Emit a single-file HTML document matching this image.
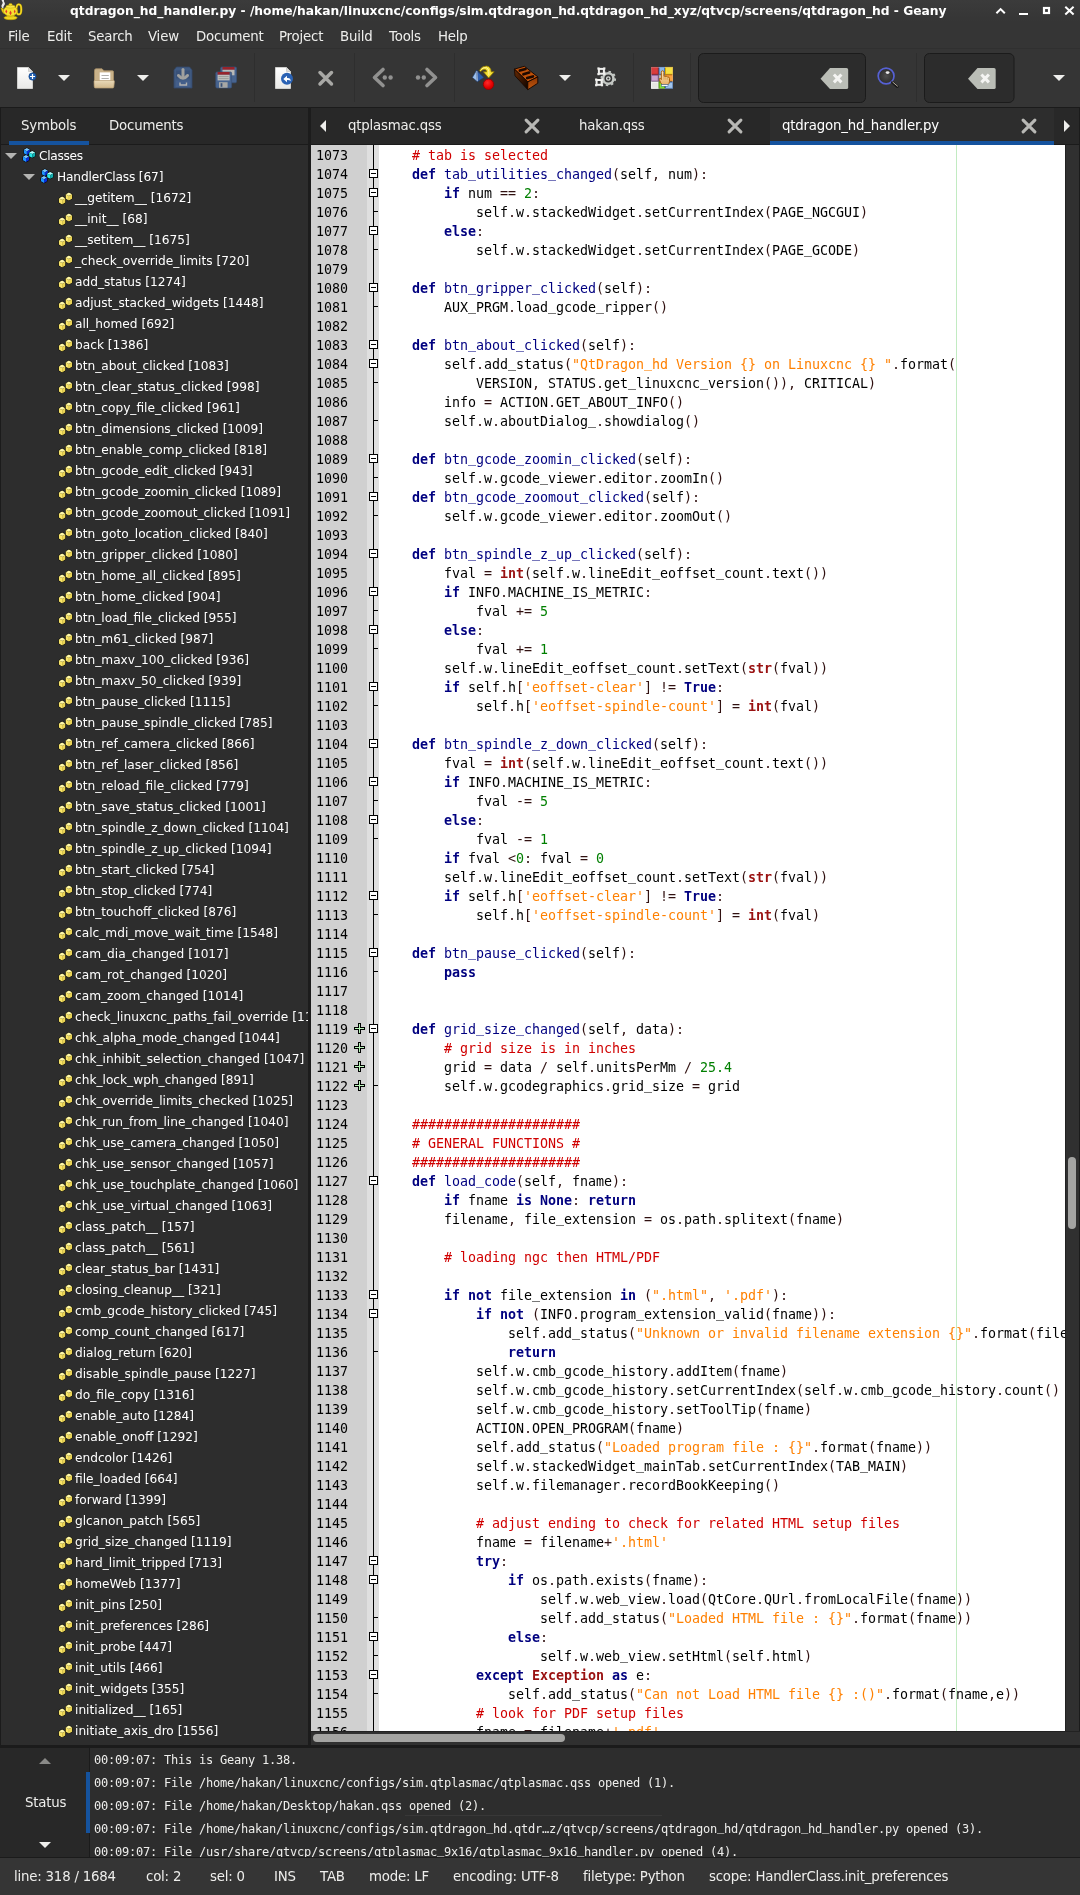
<!DOCTYPE html>
<html><head><meta charset="utf-8"><title>Geany</title>
<style>
*{box-sizing:border-box;margin:0;padding:0}
html,body{width:1080px;height:1895px;overflow:hidden;background:#353535}
body{position:relative;will-change:transform;font-family:"DejaVu Sans","Liberation Sans",sans-serif;font-size:13.33px;letter-spacing:-0.2px;color:#eeeeec}
svg{display:block;overflow:visible}
.a{position:absolute}
#title{position:absolute;left:0;top:0;width:1080px;height:22px;background:linear-gradient(#3b3b3b,#353535)}
#title .t{position:absolute;left:70px;top:3px;font-weight:bold;font-size:12.27px;letter-spacing:0;color:#fff;white-space:nowrap;line-height:16px}
#menu{position:absolute;left:0;top:22px;width:1080px;height:27px;background:#353535;border-bottom:1px solid #303030}
#menu span{position:absolute;top:7px;line-height:16px;color:#eeeeec;white-space:nowrap}
#tool{position:absolute;left:0;top:50px;width:1080px;height:57px;background:#353535}
#tool .sep{position:absolute;top:3px;width:1px;height:49px;background:#282828}
#tool .ent{position:absolute;top:3px;height:50px;background:#2a2a2a;border:1px solid #1a1a1a;border-radius:5px}
#side{position:absolute;left:0;top:107px;width:308px;height:1638px;background:#2d2d2d;overflow:hidden;border-top:1px solid #1b1b1b}
#side .lb{position:absolute;left:0;top:0;width:1px;height:1639px;background:#1b1b1b}
#side .hdr{position:absolute;left:0;top:0;width:308px;height:37px;background:#282828;border-bottom:1px solid #1b1b1b}
#side .hdr span{position:absolute;top:10px;line-height:16px}
#side .hdr .ul{position:absolute;left:9px;top:33px;width:80px;height:4px;background:#15539e}
.ti{position:absolute;left:75px;height:21px;line-height:22px;white-space:nowrap;font-size:12.18px;letter-spacing:0;color:#fff}
.ti .mi{position:absolute;left:-18px;top:2px}
#ed{position:absolute;left:311px;top:107px;width:769px;height:1638px;background:#fff;overflow:hidden;border-top:1px solid #1b1b1b}
#psep{position:absolute;left:308px;top:107px;width:3px;height:1638px;background:#1c1c1c}
#ed .hdr{position:absolute;left:0;top:0;width:769px;height:37px;background:#282828;border-bottom:1px solid #1b1b1b}
#ed .hdr span{position:absolute;top:10px;line-height:16px;white-space:nowrap}
#ed .hdr .act{position:absolute;left:459px;top:0;width:284px;height:37px;background:#2d2d2d;border-bottom:4px solid #15539e}
#lnm{position:absolute;left:0;top:37px;width:56px;height:1586px;background:#d0d0d0}
#fm{position:absolute;left:56px;top:37px;width:12px;height:1586px;background:#dfdfdf}
#fm .vl{position:absolute;left:6px;top:0;width:1px;height:1586px;background:#000}
.ln{position:absolute;left:5px;margin-top:1px;height:19px;line-height:19px;font-family:"DejaVu Sans Mono","Liberation Mono",monospace;font-size:13.33px;letter-spacing:-0.025px;color:#000}
#code{position:absolute;left:68px;top:37px;width:686px;height:1586px;background:#fff;overflow:hidden}
.cl{position:absolute;left:1px;margin-top:1px;height:19px;line-height:19px;font-family:"DejaVu Sans Mono","Liberation Mono",monospace;font-size:13.33px;letter-spacing:-0.025px;color:#000;white-space:pre}
.cl u,.ml u{text-decoration:none;position:relative;top:-2px}
.c{color:#d00000}.s{color:#ff8000}.n{color:#007f00}.k{color:#00007f;font-weight:bold}.b{color:#991111;font-weight:bold}.f{color:#000080}.o{color:#301010}
.fb{position:absolute;left:58px;width:9px;height:9px;background:#fff;border:1px solid #000}
.fb:after{content:"";position:absolute;left:1px;top:3px;width:5px;height:1px;background:#000}
.ft{position:absolute;left:63px;width:4px;height:1px;background:#000}
.pm{position:absolute;left:43px;width:11px;height:11px}
.pm b{position:absolute;left:4px;top:0;width:3px;height:11px;background:#b8f4b8;border:1px solid #000}
.pm u{position:absolute;left:0;top:4px;width:11px;height:3px;background:#b8f4b8;border:1px solid #000}
.pm:after{content:"";position:absolute;left:5px;top:1px;width:1px;height:9px;background:#b8f4b8}
#llm{position:absolute;left:577px;top:0;width:1px;height:1586px;background:#c2ebc2}
#vsb{position:absolute;left:754px;top:37px;width:15px;height:1586px;background:#303030;border-left:1px solid #222}
#vsb i{position:absolute;left:2px;top:1012px;width:8px;height:72px;border-radius:4px;background:#a4a4a2}
#hsb{position:absolute;left:0;top:1623px;width:769px;height:14px;background:#303030;border-top:1px solid #222}
#hsb i{position:absolute;left:2px;top:2px;width:252px;height:8px;border-radius:4px;background:#a4a4a2}
#msg{position:absolute;left:0;top:1745px;width:1080px;height:113px;background:#2d2d2d;border-top:3px solid #1b1b1b;border-bottom:1px solid #1b1b1b;overflow:hidden}
#msg .tabs{position:absolute;left:0;top:0;width:90px;height:110px;background:#282828;border-right:1px solid #1b1b1b}
#msg .ml{position:absolute;left:94px;height:23px;line-height:23px;margin-top:1px;font-family:"DejaVu Sans Mono","Liberation Mono",monospace;font-size:12px;letter-spacing:-0.225px;white-space:pre;color:#eeeeec}
#stat{position:absolute;left:0;top:1858px;width:1080px;height:37px;background:#353535}
#stat span{position:absolute;top:11px;line-height:16px;white-space:nowrap;color:#eeeeec}
</style></head><body>
<svg width="0" height="0" style="position:absolute"><defs>
<g id="mth"><path d="M5.10 7.40 L8.30 9.20 L8.30 13.60 L5.10 15.40 L1.90 13.60 L1.90 9.20Z" fill="#000" stroke="#000" stroke-width="1.0" stroke-linejoin="round"/><path d="M5.10 7.40 L8.30 9.20 L5.10 11.00 L1.90 9.20Z" fill="#fff8a8"/><path d="M1.90 9.20 L5.10 11.00 L5.10 15.40 L1.90 13.60Z" fill="#f8e468"/><path d="M5.10 11.00 L8.30 9.20 L8.30 13.60 L5.10 15.40Z" fill="#ead456"/><path d="M11.90 3.50 L15.10 5.30 L15.10 9.70 L11.90 11.50 L8.70 9.70 L8.70 5.30Z" fill="#000" stroke="#000" stroke-width="1.0" stroke-linejoin="round"/><path d="M11.90 3.50 L15.10 5.30 L11.90 7.10 L8.70 5.30Z" fill="#fff8a8"/><path d="M8.70 5.30 L11.90 7.10 L11.90 11.50 L8.70 9.70Z" fill="#f8e468"/><path d="M11.90 7.10 L15.10 5.30 L15.10 9.70 L11.90 11.50Z" fill="#ead456"/></g>
<g id="cls"><path d="M5.90 1.10 L8.90 2.63 L8.90 6.37 L5.90 7.90 L2.90 6.37 L2.90 2.63Z" fill="#000" stroke="#000" stroke-width="1.0" stroke-linejoin="round"/><path d="M5.90 1.10 L8.90 2.63 L5.90 4.16 L2.90 2.63Z" fill="#7cc8ff"/><path d="M2.90 2.63 L5.90 4.16 L5.90 7.90 L2.90 6.37Z" fill="#1e96ff"/><path d="M5.90 4.16 L8.90 2.63 L8.90 6.37 L5.90 7.90Z" fill="#0a30d8"/><path d="M5.00 8.10 L8.00 9.63 L8.00 13.37 L5.00 14.90 L2.00 13.37 L2.00 9.63Z" fill="#000" stroke="#000" stroke-width="1.0" stroke-linejoin="round"/><path d="M5.00 8.10 L8.00 9.63 L5.00 11.16 L2.00 9.63Z" fill="#7cc8ff"/><path d="M2.00 9.63 L5.00 11.16 L5.00 14.90 L2.00 13.37Z" fill="#1e96ff"/><path d="M5.00 11.16 L8.00 9.63 L8.00 13.37 L5.00 14.90Z" fill="#0a30d8"/><path d="M11.20 4.00 L14.20 5.53 L14.20 9.27 L11.20 10.80 L8.20 9.27 L8.20 5.53Z" fill="#000" stroke="#000" stroke-width="1.0" stroke-linejoin="round"/><path d="M11.20 4.00 L14.20 5.53 L11.20 7.06 L8.20 5.53Z" fill="#b0ffff"/><path d="M8.20 5.53 L11.20 7.06 L11.20 10.80 L8.20 9.27Z" fill="#28e8e8"/><path d="M11.20 7.06 L14.20 5.53 L14.20 9.27 L11.20 10.80Z" fill="#12b0b0"/></g>
<g id="dd"><path d="M0 0 L12 0 L6 6Z" fill="#eeeeec"/></g>
<g id="clr"><path d="M0 10.2 L9.5 -.5 L26 -.5 Q27.7 -.5 27.7 1.2 L27.7 19 Q27.7 20.6 26 20.6 L9.5 20.6Z" fill="#babdb6"/><path d="M13.4 6 L20.9 13.9 M20.9 6 L13.4 13.9" stroke="#f4f4f2" stroke-width="3"/></g>
<g id="tx"><path d="M2.1 2.1 L13.9 13.9 M13.9 2.1 L2.1 13.9" stroke="#b8b8b5" stroke-width="3.1" stroke-linecap="round"/></g>
</defs></svg>
<div id="title"><div class="t">qtdragon_hd_handler.py - /home/hakan/linuxcnc/configs/sim.qtdragon_hd.qtdragon_hd_xyz/qtvcp/screens/qtdragon_hd - Geany</div>
<svg class="a" style="left:0;top:0" width="24" height="22" viewBox="0 0 24 22">
<path d="M2.6 8.2 Q0.6 6.2 2 4.4 Q3.4 2.8 2 1.2 Q1.2 .2 2.4 -.4 L4.4 -.4 Q3.4 .8 4.4 2.2 Q5.6 4.2 4 5.8 Q3 7 3.6 8.4Z" fill="#f4f4f4" opacity=".95"/>
<path d="M.9 8.2 Q2 7.6 2.8 8.6 Q3.8 10.6 5 11.4 L4.4 14 Q2 12.6 .9 8.2Z" fill="#f0d820" stroke="#b89a00" stroke-width=".5"/>
<ellipse cx="18.8" cy="9.4" rx="2.5" ry="5" fill="none" stroke="#b89a00" stroke-width="2.2"/>
<ellipse cx="18.8" cy="9.4" rx="2.5" ry="5" fill="none" stroke="#f4dc28" stroke-width="1.4"/>
<ellipse cx="10.6" cy="17.8" rx="6.6" ry="1.9" fill="#f0d820" stroke="#b89a00" stroke-width=".6"/>
<path d="M6.5 15 L14.7 15 L13.4 17.4 L7.8 17.4Z" fill="#e4c818"/>
<ellipse cx="10.4" cy="11" rx="7.1" ry="5.1" fill="#f6e030" stroke="#b89a00" stroke-width=".6"/>
<ellipse cx="10.5" cy="6.6" rx="4.6" ry="1.5" fill="#f8e84a" stroke="#c4a600" stroke-width=".5"/>
<ellipse cx="10.5" cy="4.6" rx="1.7" ry="1.2" fill="#f6e030" stroke="#c4a600" stroke-width=".5"/>
<path d="M6.3 9.6 L7.3 11.6 L6.3 13.6 L5.3 11.6Z M10.5 10.6 L11.7 12.9 L10.5 15.2 L9.3 12.9Z M14.7 9.6 L15.6 11.5 L14.7 13.4 L13.8 11.5Z" fill="#e23a2a"/>
</svg>
<svg class="a" style="left:985px;top:0" width="95" height="22" viewBox="985 0 95 22">
<path d="M996.4 13.3 L1000.6 9.1 L1004.8 13.3" fill="none" stroke="#fff" stroke-width="2"/>
<rect x="1019" y="13" width="9" height="2" fill="#fff"/>
<rect x="1044" y="8" width="5" height="5" fill="none" stroke="#fff" stroke-width="2.2"/>
<path d="M1065.3 6.7 L1073.6 14.4 M1073.6 6.7 L1065.3 14.4" stroke="#fff" stroke-width="2"/>
</svg>
</div>
<div id="menu"><span style="left:8px">File</span><span style="left:47px">Edit</span><span style="left:88px">Search</span><span style="left:148px">View</span><span style="left:196px">Document</span><span style="left:279px">Project</span><span style="left:340px">Build</span><span style="left:389px">Tools</span><span style="left:438px">Help</span></div>
<div id="tool">

<svg class="a" style="left:0;top:0" width="1080" height="57" viewBox="0 50 1080 57">
<defs>
<linearGradient id="pg" x1="0" y1="0" x2="0" y2="1"><stop offset="0" stop-color="#ffffff"/><stop offset="1" stop-color="#e9e9e7"/></linearGradient>
<linearGradient id="fg" x1="0" y1="0" x2="0" y2="1"><stop offset="0" stop-color="#e9d9b8"/><stop offset="1" stop-color="#d2b98c"/></linearGradient>
<radialGradient id="rg" cx=".4" cy=".35" r=".7"><stop offset="0" stop-color="#ff2a2a"/><stop offset=".7" stop-color="#e00000"/><stop offset="1" stop-color="#c40000"/></radialGradient>
<radialGradient id="mg" cx=".5" cy=".5" r=".6"><stop offset="0" stop-color="#4e4e4e"/><stop offset="1" stop-color="#242424"/></radialGradient>
</defs>
<!-- new -->
<path d="M17.5 67.5 L28.5 67.5 L32.5 71.5 L32.5 88.5 L17.5 88.5Z" fill="url(#pg)" stroke="#cfcfcd" stroke-width="1"/>
<path d="M28.5 67.5 L28.5 71.5 L32.5 71.5Z" fill="#dcdcda" stroke="#c4c4c2" stroke-width=".7"/>
<circle cx="32.5" cy="76.5" r="3.7" fill="#1f5db0" stroke="#16437f" stroke-width=".5"/>
<path d="M30 76.5 H35 M32.5 74 V79" stroke="#fff" stroke-width="1.2"/>
<use href="#dd" x="58" y="75"/>
<!-- open -->
<path d="M94.5 70.5 Q94.5 68.8 96 68.8 L102 68.8 L104 70.8 L112.5 70.8 Q113.5 70.8 113.5 72 L113.5 86 L94.5 86Z" fill="#c9b28a" stroke="#a89068" stroke-width=".8"/>
<rect x="99.7" y="72.4" width="10.6" height="9" fill="#ffffff"/>
<path d="M101.5 75.5 H108.8 M101.5 78.5 H108.8" stroke="#b0b0ae" stroke-width="1"/>
<path d="M94 81.5 Q94 80.5 95 80.5 L113.5 80.5 Q114.5 80.5 114.4 81.5 L113.8 87 Q113.7 88 112.7 88 L95.4 88 Q94.4 88 94.3 87Z" fill="url(#fg)" stroke="#b89e72" stroke-width=".7"/>
<use href="#dd" x="137" y="75"/>
<!-- save (dim) -->
<g opacity=".85">
<path d="M174 70 L176.5 67 L189.5 67 L192 70 L192 88 L174 88Z" fill="#42618f" stroke="#344d75" stroke-width=".8"/>
<path d="M176 70.5 H190 V78.5 H176Z" fill="#3a5684"/>
<path d="M176 80.5 H190 V87 H176Z" fill="#466699"/>
<path d="M183 69.5 V77" stroke="#b4b4b2" stroke-width="3" stroke-linecap="round"/>
<path d="M178.5 75.5 Q183 81 187.5 75.5" fill="none" stroke="#b4b4b2" stroke-width="3" stroke-linecap="round"/>
<path d="M180 82.5 V85 H186.5 V82.5" fill="none" stroke="#c8c8c6" stroke-width="1.4"/>
</g>
<!-- save all (dim) -->
<g opacity=".9">
<rect x="220.7" y="67" width="15.8" height="15.8" rx="1.2" fill="#4a6a9a" stroke="#3a5580" stroke-width=".7"/>
<rect x="222.5" y="67" width="12" height="2.8" fill="#a3222a"/>
<rect x="222.5" y="69.8" width="12" height="5.5" fill="#c9c9c7"/>
<rect x="215.8" y="72" width="15.8" height="16" rx="1.2" fill="#4a6a9a" stroke="#3a5580" stroke-width=".7"/>
<rect x="217.6" y="72" width="12" height="2.8" fill="#a3222a"/>
<rect x="217.6" y="74.8" width="12" height="5.6" fill="#cfcfcd"/>
<path d="M218.5 76.6 H228.7 M218.5 78.6 H228.7" stroke="#9a9a98" stroke-width=".8"/>
<rect x="219" y="82.2" width="8.6" height="5.5" fill="#b4b4b2"/>
<rect x="220.6" y="83.2" width="1.8" height="3.6" fill="#3a5580"/>
</g>
<rect x="254" y="53" width="1" height="49" fill="#2e2e2e"/>
<!-- revert -->
<path d="M275.5 67.5 L286.5 67.5 L290.5 71.5 L290.5 88.5 L275.5 88.5Z" fill="url(#pg)" stroke="#cfcfcd" stroke-width="1"/>
<path d="M286.5 67.5 L286.5 71.5 L290.5 71.5Z" fill="#dcdcda" stroke="#c4c4c2" stroke-width=".7"/>
<circle cx="287" cy="78.7" r="6" fill="#2a62b4"/>
<path d="M283.3 79 L287 75.8 L287 78 Q290.8 77.6 290.6 81.2 Q289.8 79.8 287 80 L287 82.2Z" fill="#fff"/>
<!-- close -->
<path d="M320 72.5 L331.5 84 M331.5 72.5 L320 84" stroke="#a8a8a5" stroke-width="3.5" stroke-linecap="round"/>
<rect x="354" y="53" width="1" height="49" fill="#2e2e2e"/>
<!-- back / forward (dim) -->
<g fill="none" stroke="#919190" stroke-width="3.6" stroke-linecap="round" stroke-linejoin="round">
<path d="M383 69.5 L374.5 77.5 L383 85.5"/>
<path d="M427 69.5 L435.5 77.5 L427 85.5"/>
</g>
<g fill="#919190"><circle cx="384.8" cy="77.5" r="2.2"/><circle cx="390.6" cy="77.5" r="2.2"/><circle cx="418" cy="77.5" r="2.2"/><circle cx="423.8" cy="77.5" r="2.2"/></g>
<rect x="454" y="53" width="1" height="49" fill="#2e2e2e"/>
<!-- compile -->
<path d="M476.6 70.3 L472.4 77.5 L477.4 81.7Z" fill="#9cc0ec" stroke="#1c3c70" stroke-width=".6" stroke-linejoin="round"/>
<path d="M476.6 70.3 L483.8 77.4 L477.4 81.7Z" fill="#2c5caa" stroke="#1c3c70" stroke-width=".6" stroke-linejoin="round"/>
<path d="M476.8 71 L477.4 81.2" stroke="#e8f0fc" stroke-width=".7"/>
<path d="M479.4 70.4 Q482.2 65.6 486.6 66 Q491 66.6 491.2 71.8 L494.2 71.8 L488.6 78 L483.4 71.8 L486.6 71.8 Q486.6 69.4 484.6 69.4 Q482.4 69.4 480.6 71.6Z" fill="#f6e238" stroke="#8a7400" stroke-width=".8" stroke-linejoin="round"/>
<path d="M481.2 69.4 Q483.6 67 486.4 67.6 Q488.6 68.4 488.8 71.6 L488.8 75.2" fill="none" stroke="#fffbd0" stroke-width=".8" opacity=".8"/>
<circle cx="488.5" cy="84.3" r="5.2" fill="url(#rg)" stroke="#980000" stroke-width=".9"/>
<!-- build (brick) -->
<defs><linearGradient id="br" x1="0" y1="0" x2="0" y2="1"><stop offset="0" stop-color="#8a3402"/><stop offset="1" stop-color="#c45a10"/></linearGradient><linearGradient id="bl" x1="0" y1="0" x2="1" y2="1"><stop offset="0" stop-color="#6a2a02"/><stop offset="1" stop-color="#0c0300"/></linearGradient></defs>
<path d="M514.4 69.1 L524.4 66.3 L537.8 76.9 L527.8 81.9Z" fill="#c0520a" stroke="#120500" stroke-width=".9" stroke-linejoin="round"/>
<path d="M514.4 69.1 L527.8 81.9 L527.8 89.7 L515 75.8Z" fill="url(#bl)" stroke="#1a0800" stroke-width=".9" stroke-linejoin="round"/>
<path d="M527.8 81.9 L537.8 76.9 L537.8 83.2 L527.8 89.7Z" fill="url(#br)" stroke="#120500" stroke-width=".9" stroke-linejoin="round"/>
<g stroke="#1e0900" stroke-width="2.6" stroke-linecap="round"><path d="M519.8 70.6 L525.6 68.9"/><path d="M523.4 74.3 L529.2 72.6"/><path d="M527.2 78.1 L533 76.4"/></g>
<use href="#dd" x="559" y="75"/>
<!-- gears -->
<g fill="none">
<circle cx="608.3" cy="78.5" r="5.2" stroke="#c4c8c4" stroke-width="2.6"/>
<circle cx="608.3" cy="78.5" r="6.9" stroke="#c4c8c4" stroke-width="1.8" stroke-dasharray="2.4 3.02"/>
<circle cx="608.3" cy="78.5" r="1.7" stroke="#d8dcd8" stroke-width="1.3"/>
<rect x="598.9" y="68.9" width="5" height="4.8" stroke="#f0f0ee" stroke-width="2"/>
<rect x="596.6" y="80" width="5" height="4.8" stroke="#f0f0ee" stroke-width="2"/>
</g>
<g fill="#f0f0ee"><rect x="597.4" y="67.4" width="2.2" height="2.2"/><rect x="603.2" y="67.4" width="2.2" height="2.2"/><rect x="597.4" y="73" width="2.2" height="2.2"/><rect x="603.2" y="73" width="2.2" height="2.2"/>
<rect x="595.1" y="78.5" width="2.2" height="2.2"/><rect x="600.9" y="78.5" width="2.2" height="2.2"/><rect x="595.1" y="84.1" width="2.2" height="2.2"/><rect x="600.9" y="84.1" width="2.2" height="2.2"/></g>
<rect x="633" y="53" width="1" height="49" fill="#2e2e2e"/>
<!-- color chooser -->
<rect x="651.1" y="66.9" width="7.6" height="7.8" fill="#b41c1c"/><rect x="652.0" y="67.8" width="5.8" height="6.0" fill="#d83c3c"/>
<rect x="658.7" y="66.9" width="6.3" height="7.8" fill="#3c70b4"/><rect x="659.6" y="67.8" width="4.5" height="6.0" fill="#8cb6e6"/>
<rect x="665.0" y="66.9" width="8.0" height="7.8" fill="#d4a400"/><rect x="665.9" y="67.8" width="6.2" height="6.0" fill="#f4e042"/>
<rect x="651.1" y="74.7" width="7.6" height="6.9" fill="#7c4c8c"/><rect x="652.0" y="75.6" width="5.8" height="5.1" fill="#c9a2ca"/>
<rect x="658.7" y="74.7" width="6.3" height="6.9" fill="#a0a09c"/><rect x="659.6" y="75.6" width="4.5" height="5.1" fill="#d8d8d4"/>
<rect x="665.0" y="74.7" width="8.0" height="6.9" fill="#e08020"/><rect x="665.9" y="75.6" width="6.2" height="5.1" fill="#f8a242"/>
<rect x="651.1" y="81.6" width="7.6" height="7.2" fill="#ffffff"/><rect x="652.0" y="82.5" width="5.8" height="5.4" fill="#e6e6e2"/>
<rect x="658.7" y="81.6" width="6.3" height="7.2" fill="#4e9a06"/><rect x="659.6" y="82.5" width="4.5" height="5.4" fill="#8ae234"/>
<rect x="665.0" y="81.6" width="8.0" height="7.2" fill="#2c5c9e"/><rect x="665.9" y="82.5" width="6.2" height="5.4" fill="#a2c6ee"/>
<rect x="651.6" y="67.4" width="20.9" height="20.9" fill="none" stroke="#fff" stroke-opacity=".35" stroke-width=".8"/>
<defs><linearGradient id="hd" x1="0" y1="0" x2="0" y2="1"><stop offset="0" stop-color="#fbe6c0"/><stop offset="1" stop-color="#e8b266"/></linearGradient></defs>
<path d="M661.3 72.4 Q661.3 70.8 662.6 70.8 Q663.9 70.8 663.9 72.4 L663.9 76.4 Q664.9 75.6 665.8 76.6 Q666.8 75.9 667.6 77 Q669.4 76.6 669.5 78.4 L669.5 81.6 Q669.3 83.6 668 84.7 L662 84.7 Q660.4 82.8 659.4 79.8 Q659.1 78 660.3 78.2 L661.3 79.6Z" fill="url(#hd)" stroke="#a85e08" stroke-width="1" stroke-linejoin="round"/>
<path d="M664 77 V79.6 M665.9 77.2 V79.6 M667.7 77.6 V79.8" stroke="#c88a30" stroke-width=".6"/>
<rect x="661.4" y="84.6" width="6.6" height="1.6" fill="#fff" stroke="#2c5c9e" stroke-width=".5"/>
<rect x="690" y="53" width="1" height="49" fill="#2e2e2e"/>
<!-- entries -->
<rect x="698.5" y="53.5" width="167" height="49" rx="5" fill="#2c2c2c" stroke="#1b1b1b" stroke-width="1"/>
<use href="#clr" x="820.5" y="68.5"/>
<circle cx="886.1" cy="76" r="7.9" fill="url(#mg)" stroke="#5661d4" stroke-width="1.7"/>
<ellipse cx="887.6" cy="72.6" rx="1.9" ry="1.3" fill="#fff" opacity=".9"/>
<path d="M892.4 82.5 L897.3 86.6" stroke="#1a1a1a" stroke-width="2.8" stroke-linecap="round"/>
<path d="M892.8 82.2 L897.5 86.1" stroke="#b8b0a0" stroke-width="1" stroke-linecap="round"/>
<rect x="916" y="53" width="1" height="49" fill="#2e2e2e"/>
<rect x="924.5" y="53.5" width="89.5" height="49" rx="5" fill="#2c2c2c" stroke="#1b1b1b" stroke-width="1"/>
<use href="#clr" x="968" y="68.5"/>
<path d="M1053 75 L1065 75 L1059 81Z" fill="#eeeeec"/>
</svg>

</div>
<div id="side">
<div class="hdr"><span style="left:21px">Symbols</span><span style="left:109px">Documents</span><div class="ul"></div></div>
<div class="lb"></div>
<svg class="a" style="left:5px;top:45px" width="12" height="6"><path d="M0 0 L12 0 L6 6Z" fill="#b4b4b2"/></svg>
<svg class="a" style="left:21px;top:39px" width="16" height="16"><use href="#cls"/></svg>
<div class="ti" style="left:39px;top:37px;letter-spacing:-0.3px">Classes</div>
<svg class="a" style="left:23px;top:66px" width="12" height="6"><path d="M0 0 L12 0 L6 6Z" fill="#b4b4b2"/></svg>
<svg class="a" style="left:39px;top:60px" width="16" height="16"><use href="#cls"/></svg>
<div class="ti" style="left:57px;top:58px;letter-spacing:-0.15px">HandlerClass [67]</div>
<div class="ti" style="top:79px"><svg class="mi" width="16" height="16"><use href="#mth"/></svg>__getitem__ [1672]</div>
<div class="ti" style="top:100px"><svg class="mi" width="16" height="16"><use href="#mth"/></svg>__init__ [68]</div>
<div class="ti" style="top:121px"><svg class="mi" width="16" height="16"><use href="#mth"/></svg>__setitem__ [1675]</div>
<div class="ti" style="top:142px"><svg class="mi" width="16" height="16"><use href="#mth"/></svg>_check_override_limits [720]</div>
<div class="ti" style="top:163px"><svg class="mi" width="16" height="16"><use href="#mth"/></svg>add_status [1274]</div>
<div class="ti" style="top:184px"><svg class="mi" width="16" height="16"><use href="#mth"/></svg>adjust_stacked_widgets [1448]</div>
<div class="ti" style="top:205px"><svg class="mi" width="16" height="16"><use href="#mth"/></svg>all_homed [692]</div>
<div class="ti" style="top:226px"><svg class="mi" width="16" height="16"><use href="#mth"/></svg>back [1386]</div>
<div class="ti" style="top:247px"><svg class="mi" width="16" height="16"><use href="#mth"/></svg>btn_about_clicked [1083]</div>
<div class="ti" style="top:268px"><svg class="mi" width="16" height="16"><use href="#mth"/></svg>btn_clear_status_clicked [998]</div>
<div class="ti" style="top:289px"><svg class="mi" width="16" height="16"><use href="#mth"/></svg>btn_copy_file_clicked [961]</div>
<div class="ti" style="top:310px"><svg class="mi" width="16" height="16"><use href="#mth"/></svg>btn_dimensions_clicked [1009]</div>
<div class="ti" style="top:331px"><svg class="mi" width="16" height="16"><use href="#mth"/></svg>btn_enable_comp_clicked [818]</div>
<div class="ti" style="top:352px"><svg class="mi" width="16" height="16"><use href="#mth"/></svg>btn_gcode_edit_clicked [943]</div>
<div class="ti" style="top:373px"><svg class="mi" width="16" height="16"><use href="#mth"/></svg>btn_gcode_zoomin_clicked [1089]</div>
<div class="ti" style="top:394px"><svg class="mi" width="16" height="16"><use href="#mth"/></svg>btn_gcode_zoomout_clicked [1091]</div>
<div class="ti" style="top:415px"><svg class="mi" width="16" height="16"><use href="#mth"/></svg>btn_goto_location_clicked [840]</div>
<div class="ti" style="top:436px"><svg class="mi" width="16" height="16"><use href="#mth"/></svg>btn_gripper_clicked [1080]</div>
<div class="ti" style="top:457px"><svg class="mi" width="16" height="16"><use href="#mth"/></svg>btn_home_all_clicked [895]</div>
<div class="ti" style="top:478px"><svg class="mi" width="16" height="16"><use href="#mth"/></svg>btn_home_clicked [904]</div>
<div class="ti" style="top:499px"><svg class="mi" width="16" height="16"><use href="#mth"/></svg>btn_load_file_clicked [955]</div>
<div class="ti" style="top:520px"><svg class="mi" width="16" height="16"><use href="#mth"/></svg>btn_m61_clicked [987]</div>
<div class="ti" style="top:541px"><svg class="mi" width="16" height="16"><use href="#mth"/></svg>btn_maxv_100_clicked [936]</div>
<div class="ti" style="top:562px"><svg class="mi" width="16" height="16"><use href="#mth"/></svg>btn_maxv_50_clicked [939]</div>
<div class="ti" style="top:583px"><svg class="mi" width="16" height="16"><use href="#mth"/></svg>btn_pause_clicked [1115]</div>
<div class="ti" style="top:604px"><svg class="mi" width="16" height="16"><use href="#mth"/></svg>btn_pause_spindle_clicked [785]</div>
<div class="ti" style="top:625px"><svg class="mi" width="16" height="16"><use href="#mth"/></svg>btn_ref_camera_clicked [866]</div>
<div class="ti" style="top:646px"><svg class="mi" width="16" height="16"><use href="#mth"/></svg>btn_ref_laser_clicked [856]</div>
<div class="ti" style="top:667px"><svg class="mi" width="16" height="16"><use href="#mth"/></svg>btn_reload_file_clicked [779]</div>
<div class="ti" style="top:688px"><svg class="mi" width="16" height="16"><use href="#mth"/></svg>btn_save_status_clicked [1001]</div>
<div class="ti" style="top:709px"><svg class="mi" width="16" height="16"><use href="#mth"/></svg>btn_spindle_z_down_clicked [1104]</div>
<div class="ti" style="top:730px"><svg class="mi" width="16" height="16"><use href="#mth"/></svg>btn_spindle_z_up_clicked [1094]</div>
<div class="ti" style="top:751px"><svg class="mi" width="16" height="16"><use href="#mth"/></svg>btn_start_clicked [754]</div>
<div class="ti" style="top:772px"><svg class="mi" width="16" height="16"><use href="#mth"/></svg>btn_stop_clicked [774]</div>
<div class="ti" style="top:793px"><svg class="mi" width="16" height="16"><use href="#mth"/></svg>btn_touchoff_clicked [876]</div>
<div class="ti" style="top:814px"><svg class="mi" width="16" height="16"><use href="#mth"/></svg>calc_mdi_move_wait_time [1548]</div>
<div class="ti" style="top:835px"><svg class="mi" width="16" height="16"><use href="#mth"/></svg>cam_dia_changed [1017]</div>
<div class="ti" style="top:856px"><svg class="mi" width="16" height="16"><use href="#mth"/></svg>cam_rot_changed [1020]</div>
<div class="ti" style="top:877px"><svg class="mi" width="16" height="16"><use href="#mth"/></svg>cam_zoom_changed [1014]</div>
<div class="ti" style="top:898px"><svg class="mi" width="16" height="16"><use href="#mth"/></svg>check_linuxcnc_paths_fail_override [1175]</div>
<div class="ti" style="top:919px"><svg class="mi" width="16" height="16"><use href="#mth"/></svg>chk_alpha_mode_changed [1044]</div>
<div class="ti" style="top:940px"><svg class="mi" width="16" height="16"><use href="#mth"/></svg>chk_inhibit_selection_changed [1047]</div>
<div class="ti" style="top:961px"><svg class="mi" width="16" height="16"><use href="#mth"/></svg>chk_lock_wph_changed [891]</div>
<div class="ti" style="top:982px"><svg class="mi" width="16" height="16"><use href="#mth"/></svg>chk_override_limits_checked [1025]</div>
<div class="ti" style="top:1003px"><svg class="mi" width="16" height="16"><use href="#mth"/></svg>chk_run_from_line_changed [1040]</div>
<div class="ti" style="top:1024px"><svg class="mi" width="16" height="16"><use href="#mth"/></svg>chk_use_camera_changed [1050]</div>
<div class="ti" style="top:1045px"><svg class="mi" width="16" height="16"><use href="#mth"/></svg>chk_use_sensor_changed [1057]</div>
<div class="ti" style="top:1066px"><svg class="mi" width="16" height="16"><use href="#mth"/></svg>chk_use_touchplate_changed [1060]</div>
<div class="ti" style="top:1087px"><svg class="mi" width="16" height="16"><use href="#mth"/></svg>chk_use_virtual_changed [1063]</div>
<div class="ti" style="top:1108px"><svg class="mi" width="16" height="16"><use href="#mth"/></svg>class_patch__ [157]</div>
<div class="ti" style="top:1129px"><svg class="mi" width="16" height="16"><use href="#mth"/></svg>class_patch__ [561]</div>
<div class="ti" style="top:1150px"><svg class="mi" width="16" height="16"><use href="#mth"/></svg>clear_status_bar [1431]</div>
<div class="ti" style="top:1171px"><svg class="mi" width="16" height="16"><use href="#mth"/></svg>closing_cleanup__ [321]</div>
<div class="ti" style="top:1192px"><svg class="mi" width="16" height="16"><use href="#mth"/></svg>cmb_gcode_history_clicked [745]</div>
<div class="ti" style="top:1213px"><svg class="mi" width="16" height="16"><use href="#mth"/></svg>comp_count_changed [617]</div>
<div class="ti" style="top:1234px"><svg class="mi" width="16" height="16"><use href="#mth"/></svg>dialog_return [620]</div>
<div class="ti" style="top:1255px"><svg class="mi" width="16" height="16"><use href="#mth"/></svg>disable_spindle_pause [1227]</div>
<div class="ti" style="top:1276px"><svg class="mi" width="16" height="16"><use href="#mth"/></svg>do_file_copy [1316]</div>
<div class="ti" style="top:1297px"><svg class="mi" width="16" height="16"><use href="#mth"/></svg>enable_auto [1284]</div>
<div class="ti" style="top:1318px"><svg class="mi" width="16" height="16"><use href="#mth"/></svg>enable_onoff [1292]</div>
<div class="ti" style="top:1339px"><svg class="mi" width="16" height="16"><use href="#mth"/></svg>endcolor [1426]</div>
<div class="ti" style="top:1360px"><svg class="mi" width="16" height="16"><use href="#mth"/></svg>file_loaded [664]</div>
<div class="ti" style="top:1381px"><svg class="mi" width="16" height="16"><use href="#mth"/></svg>forward [1399]</div>
<div class="ti" style="top:1402px"><svg class="mi" width="16" height="16"><use href="#mth"/></svg>glcanon_patch [565]</div>
<div class="ti" style="top:1423px"><svg class="mi" width="16" height="16"><use href="#mth"/></svg>grid_size_changed [1119]</div>
<div class="ti" style="top:1444px"><svg class="mi" width="16" height="16"><use href="#mth"/></svg>hard_limit_tripped [713]</div>
<div class="ti" style="top:1465px"><svg class="mi" width="16" height="16"><use href="#mth"/></svg>homeWeb [1377]</div>
<div class="ti" style="top:1486px"><svg class="mi" width="16" height="16"><use href="#mth"/></svg>init_pins [250]</div>
<div class="ti" style="top:1507px"><svg class="mi" width="16" height="16"><use href="#mth"/></svg>init_preferences [286]</div>
<div class="ti" style="top:1528px"><svg class="mi" width="16" height="16"><use href="#mth"/></svg>init_probe [447]</div>
<div class="ti" style="top:1549px"><svg class="mi" width="16" height="16"><use href="#mth"/></svg>init_utils [466]</div>
<div class="ti" style="top:1570px"><svg class="mi" width="16" height="16"><use href="#mth"/></svg>init_widgets [355]</div>
<div class="ti" style="top:1591px"><svg class="mi" width="16" height="16"><use href="#mth"/></svg>initialized__ [165]</div>
<div class="ti" style="top:1612px"><svg class="mi" width="16" height="16"><use href="#mth"/></svg>initiate_axis_dro [1556]</div>
</div>
<div id="psep"></div>
<div id="ed">
<div class="hdr">
<svg class="a" style="left:9px;top:12px" width="6" height="12"><path d="M6 0 L6 12 L0 6Z" fill="#eeeeec"/></svg>
<span style="left:37px">qtplasmac.qss</span>
<svg class="a" style="left:213px;top:10px" width="16" height="16"><use href="#tx"/></svg>
<span style="left:268px">hakan.qss</span>
<svg class="a" style="left:416px;top:10px" width="16" height="16"><use href="#tx"/></svg>
<div class="act"></div>
<span style="left:471px;color:#fff">qtdragon_hd_handler.py</span>
<svg class="a" style="left:710px;top:10px" width="16" height="16"><use href="#tx"/></svg>
<svg class="a" style="left:753px;top:12px" width="6" height="12"><path d="M0 0 L0 12 L6 6Z" fill="#eeeeec"/></svg>
</div>
<div id="lnm">
<div class="ln" style="top:0px">1073</div>
<div class="ln" style="top:19px">1074</div>
<div class="ln" style="top:38px">1075</div>
<div class="ln" style="top:57px">1076</div>
<div class="ln" style="top:76px">1077</div>
<div class="ln" style="top:95px">1078</div>
<div class="ln" style="top:114px">1079</div>
<div class="ln" style="top:133px">1080</div>
<div class="ln" style="top:152px">1081</div>
<div class="ln" style="top:171px">1082</div>
<div class="ln" style="top:190px">1083</div>
<div class="ln" style="top:209px">1084</div>
<div class="ln" style="top:228px">1085</div>
<div class="ln" style="top:247px">1086</div>
<div class="ln" style="top:266px">1087</div>
<div class="ln" style="top:285px">1088</div>
<div class="ln" style="top:304px">1089</div>
<div class="ln" style="top:323px">1090</div>
<div class="ln" style="top:342px">1091</div>
<div class="ln" style="top:361px">1092</div>
<div class="ln" style="top:380px">1093</div>
<div class="ln" style="top:399px">1094</div>
<div class="ln" style="top:418px">1095</div>
<div class="ln" style="top:437px">1096</div>
<div class="ln" style="top:456px">1097</div>
<div class="ln" style="top:475px">1098</div>
<div class="ln" style="top:494px">1099</div>
<div class="ln" style="top:513px">1100</div>
<div class="ln" style="top:532px">1101</div>
<div class="ln" style="top:551px">1102</div>
<div class="ln" style="top:570px">1103</div>
<div class="ln" style="top:589px">1104</div>
<div class="ln" style="top:608px">1105</div>
<div class="ln" style="top:627px">1106</div>
<div class="ln" style="top:646px">1107</div>
<div class="ln" style="top:665px">1108</div>
<div class="ln" style="top:684px">1109</div>
<div class="ln" style="top:703px">1110</div>
<div class="ln" style="top:722px">1111</div>
<div class="ln" style="top:741px">1112</div>
<div class="ln" style="top:760px">1113</div>
<div class="ln" style="top:779px">1114</div>
<div class="ln" style="top:798px">1115</div>
<div class="ln" style="top:817px">1116</div>
<div class="ln" style="top:836px">1117</div>
<div class="ln" style="top:855px">1118</div>
<div class="ln" style="top:874px">1119</div>
<div class="ln" style="top:893px">1120</div>
<div class="ln" style="top:912px">1121</div>
<div class="ln" style="top:931px">1122</div>
<div class="ln" style="top:950px">1123</div>
<div class="ln" style="top:969px">1124</div>
<div class="ln" style="top:988px">1125</div>
<div class="ln" style="top:1007px">1126</div>
<div class="ln" style="top:1026px">1127</div>
<div class="ln" style="top:1045px">1128</div>
<div class="ln" style="top:1064px">1129</div>
<div class="ln" style="top:1083px">1130</div>
<div class="ln" style="top:1102px">1131</div>
<div class="ln" style="top:1121px">1132</div>
<div class="ln" style="top:1140px">1133</div>
<div class="ln" style="top:1159px">1134</div>
<div class="ln" style="top:1178px">1135</div>
<div class="ln" style="top:1197px">1136</div>
<div class="ln" style="top:1216px">1137</div>
<div class="ln" style="top:1235px">1138</div>
<div class="ln" style="top:1254px">1139</div>
<div class="ln" style="top:1273px">1140</div>
<div class="ln" style="top:1292px">1141</div>
<div class="ln" style="top:1311px">1142</div>
<div class="ln" style="top:1330px">1143</div>
<div class="ln" style="top:1349px">1144</div>
<div class="ln" style="top:1368px">1145</div>
<div class="ln" style="top:1387px">1146</div>
<div class="ln" style="top:1406px">1147</div>
<div class="ln" style="top:1425px">1148</div>
<div class="ln" style="top:1444px">1149</div>
<div class="ln" style="top:1463px">1150</div>
<div class="ln" style="top:1482px">1151</div>
<div class="ln" style="top:1501px">1152</div>
<div class="ln" style="top:1520px">1153</div>
<div class="ln" style="top:1539px">1154</div>
<div class="ln" style="top:1558px">1155</div>
<div class="ln" style="top:1577px">1156</div>
</div>
<div id="fm"><div class="vl"></div></div>
<div style="position:absolute;left:0;top:37px;width:70px;height:1586px;overflow:hidden">
<i class="fb" style="top:24px"></i>
<i class="fb" style="top:43px"></i>
<i class="ft" style="top:66px"></i>
<i class="fb" style="top:81px"></i>
<i class="ft" style="top:104px"></i>
<i class="fb" style="top:138px"></i>
<i class="ft" style="top:161px"></i>
<i class="fb" style="top:195px"></i>
<i class="fb" style="top:214px"></i>
<i class="ft" style="top:237px"></i>
<i class="ft" style="top:275px"></i>
<i class="fb" style="top:309px"></i>
<i class="ft" style="top:332px"></i>
<i class="fb" style="top:347px"></i>
<i class="ft" style="top:370px"></i>
<i class="fb" style="top:404px"></i>
<i class="fb" style="top:442px"></i>
<i class="ft" style="top:465px"></i>
<i class="fb" style="top:480px"></i>
<i class="ft" style="top:503px"></i>
<i class="fb" style="top:537px"></i>
<i class="ft" style="top:560px"></i>
<i class="fb" style="top:594px"></i>
<i class="fb" style="top:632px"></i>
<i class="ft" style="top:655px"></i>
<i class="fb" style="top:670px"></i>
<i class="ft" style="top:693px"></i>
<i class="fb" style="top:746px"></i>
<i class="ft" style="top:769px"></i>
<i class="fb" style="top:803px"></i>
<i class="ft" style="top:826px"></i>
<i class="fb" style="top:879px"></i>
<i class="pm" style="top:878px"><b></b><u></u></i>
<i class="pm" style="top:897px"><b></b><u></u></i>
<i class="pm" style="top:916px"><b></b><u></u></i>
<i class="ft" style="top:940px"></i>
<i class="pm" style="top:935px"><b></b><u></u></i>
<i class="fb" style="top:1031px"></i>
<i class="fb" style="top:1145px"></i>
<i class="fb" style="top:1164px"></i>
<i class="ft" style="top:1206px"></i>
<i class="fb" style="top:1411px"></i>
<i class="fb" style="top:1430px"></i>
<i class="ft" style="top:1472px"></i>
<i class="fb" style="top:1487px"></i>
<i class="ft" style="top:1510px"></i>
<i class="fb" style="top:1525px"></i>
<i class="ft" style="top:1548px"></i>
</div>
<div id="code"><div id="llm"></div>
<div class="cl" style="top:0px">    <span class="c"># tab is selected</span></div>
<div class="cl" style="top:19px">    <span class="k">def</span> <span class="f">tab<u>_</u>utilities<u>_</u>changed</span><span class="o">(</span>self<span class="o">,</span> num<span class="o">):</span></div>
<div class="cl" style="top:38px">        <span class="k">if</span> num <span class="o">==</span> <span class="n">2</span><span class="o">:</span></div>
<div class="cl" style="top:57px">            self<span class="o">.</span>w<span class="o">.</span>stackedWidget<span class="o">.</span>setCurrentIndex<span class="o">(</span>PAGE<u>_</u>NGCGUI<span class="o">)</span></div>
<div class="cl" style="top:76px">        <span class="k">else</span><span class="o">:</span></div>
<div class="cl" style="top:95px">            self<span class="o">.</span>w<span class="o">.</span>stackedWidget<span class="o">.</span>setCurrentIndex<span class="o">(</span>PAGE<u>_</u>GCODE<span class="o">)</span></div>
<div class="cl" style="top:133px">    <span class="k">def</span> <span class="f">btn<u>_</u>gripper<u>_</u>clicked</span><span class="o">(</span>self<span class="o">):</span></div>
<div class="cl" style="top:152px">        AUX<u>_</u>PRGM<span class="o">.</span>load<u>_</u>gcode<u>_</u>ripper<span class="o">()</span></div>
<div class="cl" style="top:190px">    <span class="k">def</span> <span class="f">btn<u>_</u>about<u>_</u>clicked</span><span class="o">(</span>self<span class="o">):</span></div>
<div class="cl" style="top:209px">        self<span class="o">.</span>add<u>_</u>status<span class="o">(</span><span class="s">&quot;QtDragon<u>_</u>hd Version {} on Linuxcnc {} &quot;</span><span class="o">.</span>format<span class="o">(</span></div>
<div class="cl" style="top:228px">            VERSION<span class="o">,</span> STATUS<span class="o">.</span>get<u>_</u>linuxcnc<u>_</u>version<span class="o">()),</span> CRITICAL<span class="o">)</span></div>
<div class="cl" style="top:247px">        info <span class="o">=</span> ACTION<span class="o">.</span>GET<u>_</u>ABOUT<u>_</u>INFO<span class="o">()</span></div>
<div class="cl" style="top:266px">        self<span class="o">.</span>w<span class="o">.</span>aboutDialog<u>_</u><span class="o">.</span>showdialog<span class="o">()</span></div>
<div class="cl" style="top:304px">    <span class="k">def</span> <span class="f">btn<u>_</u>gcode<u>_</u>zoomin<u>_</u>clicked</span><span class="o">(</span>self<span class="o">):</span></div>
<div class="cl" style="top:323px">        self<span class="o">.</span>w<span class="o">.</span>gcode<u>_</u>viewer<span class="o">.</span>editor<span class="o">.</span>zoomIn<span class="o">()</span></div>
<div class="cl" style="top:342px">    <span class="k">def</span> <span class="f">btn<u>_</u>gcode<u>_</u>zoomout<u>_</u>clicked</span><span class="o">(</span>self<span class="o">):</span></div>
<div class="cl" style="top:361px">        self<span class="o">.</span>w<span class="o">.</span>gcode<u>_</u>viewer<span class="o">.</span>editor<span class="o">.</span>zoomOut<span class="o">()</span></div>
<div class="cl" style="top:399px">    <span class="k">def</span> <span class="f">btn<u>_</u>spindle<u>_</u>z<u>_</u>up<u>_</u>clicked</span><span class="o">(</span>self<span class="o">):</span></div>
<div class="cl" style="top:418px">        fval <span class="o">=</span> <span class="b">int</span><span class="o">(</span>self<span class="o">.</span>w<span class="o">.</span>lineEdit<u>_</u>eoffset<u>_</u>count<span class="o">.</span>text<span class="o">())</span></div>
<div class="cl" style="top:437px">        <span class="k">if</span> INFO<span class="o">.</span>MACHINE<u>_</u>IS<u>_</u>METRIC<span class="o">:</span></div>
<div class="cl" style="top:456px">            fval <span class="o">+=</span> <span class="n">5</span></div>
<div class="cl" style="top:475px">        <span class="k">else</span><span class="o">:</span></div>
<div class="cl" style="top:494px">            fval <span class="o">+=</span> <span class="n">1</span></div>
<div class="cl" style="top:513px">        self<span class="o">.</span>w<span class="o">.</span>lineEdit<u>_</u>eoffset<u>_</u>count<span class="o">.</span>setText<span class="o">(</span><span class="b">str</span><span class="o">(</span>fval<span class="o">))</span></div>
<div class="cl" style="top:532px">        <span class="k">if</span> self<span class="o">.</span>h<span class="o">[</span><span class="s">&#x27;eoffset-clear&#x27;</span><span class="o">]</span> <span class="o">!=</span> <span class="k">True</span><span class="o">:</span></div>
<div class="cl" style="top:551px">            self<span class="o">.</span>h<span class="o">[</span><span class="s">&#x27;eoffset-spindle-count&#x27;</span><span class="o">]</span> <span class="o">=</span> <span class="b">int</span><span class="o">(</span>fval<span class="o">)</span></div>
<div class="cl" style="top:589px">    <span class="k">def</span> <span class="f">btn<u>_</u>spindle<u>_</u>z<u>_</u>down<u>_</u>clicked</span><span class="o">(</span>self<span class="o">):</span></div>
<div class="cl" style="top:608px">        fval <span class="o">=</span> <span class="b">int</span><span class="o">(</span>self<span class="o">.</span>w<span class="o">.</span>lineEdit<u>_</u>eoffset<u>_</u>count<span class="o">.</span>text<span class="o">())</span></div>
<div class="cl" style="top:627px">        <span class="k">if</span> INFO<span class="o">.</span>MACHINE<u>_</u>IS<u>_</u>METRIC<span class="o">:</span></div>
<div class="cl" style="top:646px">            fval <span class="o">-=</span> <span class="n">5</span></div>
<div class="cl" style="top:665px">        <span class="k">else</span><span class="o">:</span></div>
<div class="cl" style="top:684px">            fval <span class="o">-=</span> <span class="n">1</span></div>
<div class="cl" style="top:703px">        <span class="k">if</span> fval <span class="o">&lt;</span><span class="n">0</span><span class="o">:</span> fval <span class="o">=</span> <span class="n">0</span></div>
<div class="cl" style="top:722px">        self<span class="o">.</span>w<span class="o">.</span>lineEdit<u>_</u>eoffset<u>_</u>count<span class="o">.</span>setText<span class="o">(</span><span class="b">str</span><span class="o">(</span>fval<span class="o">))</span></div>
<div class="cl" style="top:741px">        <span class="k">if</span> self<span class="o">.</span>h<span class="o">[</span><span class="s">&#x27;eoffset-clear&#x27;</span><span class="o">]</span> <span class="o">!=</span> <span class="k">True</span><span class="o">:</span></div>
<div class="cl" style="top:760px">            self<span class="o">.</span>h<span class="o">[</span><span class="s">&#x27;eoffset-spindle-count&#x27;</span><span class="o">]</span> <span class="o">=</span> <span class="b">int</span><span class="o">(</span>fval<span class="o">)</span></div>
<div class="cl" style="top:798px">    <span class="k">def</span> <span class="f">btn<u>_</u>pause<u>_</u>clicked</span><span class="o">(</span>self<span class="o">):</span></div>
<div class="cl" style="top:817px">        <span class="k">pass</span></div>
<div class="cl" style="top:874px">    <span class="k">def</span> <span class="f">grid<u>_</u>size<u>_</u>changed</span><span class="o">(</span>self<span class="o">,</span> data<span class="o">):</span></div>
<div class="cl" style="top:893px">        <span class="c"># grid size is in inches</span></div>
<div class="cl" style="top:912px">        grid <span class="o">=</span> data <span class="o">/</span> self<span class="o">.</span>unitsPerMm <span class="o">/</span> <span class="n">25.4</span></div>
<div class="cl" style="top:931px">        self<span class="o">.</span>w<span class="o">.</span>gcodegraphics<span class="o">.</span>grid<u>_</u>size <span class="o">=</span> grid</div>
<div class="cl" style="top:969px">    <span class="c">#####################</span></div>
<div class="cl" style="top:988px">    <span class="c"># GENERAL FUNCTIONS #</span></div>
<div class="cl" style="top:1007px">    <span class="c">#####################</span></div>
<div class="cl" style="top:1026px">    <span class="k">def</span> <span class="f">load<u>_</u>code</span><span class="o">(</span>self<span class="o">,</span> fname<span class="o">):</span></div>
<div class="cl" style="top:1045px">        <span class="k">if</span> fname <span class="k">is</span> <span class="k">None</span><span class="o">:</span> <span class="k">return</span></div>
<div class="cl" style="top:1064px">        filename<span class="o">,</span> file<u>_</u>extension <span class="o">=</span> os<span class="o">.</span>path<span class="o">.</span>splitext<span class="o">(</span>fname<span class="o">)</span></div>
<div class="cl" style="top:1102px">        <span class="c"># loading ngc then HTML/PDF</span></div>
<div class="cl" style="top:1140px">        <span class="k">if</span> <span class="k">not</span> file<u>_</u>extension <span class="k">in</span> <span class="o">(</span><span class="s">&quot;.html&quot;</span><span class="o">,</span> <span class="s">&#x27;.pdf&#x27;</span><span class="o">):</span></div>
<div class="cl" style="top:1159px">            <span class="k">if</span> <span class="k">not</span> <span class="o">(</span>INFO<span class="o">.</span>program<u>_</u>extension<u>_</u>valid<span class="o">(</span>fname<span class="o">)):</span></div>
<div class="cl" style="top:1178px">                self<span class="o">.</span>add<u>_</u>status<span class="o">(</span><span class="s">&quot;Unknown or invalid filename extension {}&quot;</span><span class="o">.</span>format<span class="o">(</span>file<u>_</u>extension<span class="o">),</span> WARNING<span class="o">)</span></div>
<div class="cl" style="top:1197px">                <span class="k">return</span></div>
<div class="cl" style="top:1216px">            self<span class="o">.</span>w<span class="o">.</span>cmb<u>_</u>gcode<u>_</u>history<span class="o">.</span>addItem<span class="o">(</span>fname<span class="o">)</span></div>
<div class="cl" style="top:1235px">            self<span class="o">.</span>w<span class="o">.</span>cmb<u>_</u>gcode<u>_</u>history<span class="o">.</span>setCurrentIndex<span class="o">(</span>self<span class="o">.</span>w<span class="o">.</span>cmb<u>_</u>gcode<u>_</u>history<span class="o">.</span>count<span class="o">()</span> <span class="o">-</span> <span class="n">1</span><span class="o">)</span></div>
<div class="cl" style="top:1254px">            self<span class="o">.</span>w<span class="o">.</span>cmb<u>_</u>gcode<u>_</u>history<span class="o">.</span>setToolTip<span class="o">(</span>fname<span class="o">)</span></div>
<div class="cl" style="top:1273px">            ACTION<span class="o">.</span>OPEN<u>_</u>PROGRAM<span class="o">(</span>fname<span class="o">)</span></div>
<div class="cl" style="top:1292px">            self<span class="o">.</span>add<u>_</u>status<span class="o">(</span><span class="s">&quot;Loaded program file : {}&quot;</span><span class="o">.</span>format<span class="o">(</span>fname<span class="o">))</span></div>
<div class="cl" style="top:1311px">            self<span class="o">.</span>w<span class="o">.</span>stackedWidget<u>_</u>mainTab<span class="o">.</span>setCurrentIndex<span class="o">(</span>TAB<u>_</u>MAIN<span class="o">)</span></div>
<div class="cl" style="top:1330px">            self<span class="o">.</span>w<span class="o">.</span>filemanager<span class="o">.</span>recordBookKeeping<span class="o">()</span></div>
<div class="cl" style="top:1368px">            <span class="c"># adjust ending to check for related HTML setup files</span></div>
<div class="cl" style="top:1387px">            fname <span class="o">=</span> filename<span class="o">+</span><span class="s">&#x27;.html&#x27;</span></div>
<div class="cl" style="top:1406px">            <span class="k">try</span><span class="o">:</span></div>
<div class="cl" style="top:1425px">                <span class="k">if</span> os<span class="o">.</span>path<span class="o">.</span>exists<span class="o">(</span>fname<span class="o">):</span></div>
<div class="cl" style="top:1444px">                    self<span class="o">.</span>w<span class="o">.</span>web<u>_</u>view<span class="o">.</span>load<span class="o">(</span>QtCore<span class="o">.</span>QUrl<span class="o">.</span>fromLocalFile<span class="o">(</span>fname<span class="o">))</span></div>
<div class="cl" style="top:1463px">                    self<span class="o">.</span>add<u>_</u>status<span class="o">(</span><span class="s">&quot;Loaded HTML file : {}&quot;</span><span class="o">.</span>format<span class="o">(</span>fname<span class="o">))</span></div>
<div class="cl" style="top:1482px">                <span class="k">else</span><span class="o">:</span></div>
<div class="cl" style="top:1501px">                    self<span class="o">.</span>w<span class="o">.</span>web<u>_</u>view<span class="o">.</span>setHtml<span class="o">(</span>self<span class="o">.</span>html<span class="o">)</span></div>
<div class="cl" style="top:1520px">            <span class="k">except</span> <span class="b">Exception</span> <span class="k">as</span> e<span class="o">:</span></div>
<div class="cl" style="top:1539px">                self<span class="o">.</span>add<u>_</u>status<span class="o">(</span><span class="s">&quot;Can not Load HTML file {} :()&quot;</span><span class="o">.</span>format<span class="o">(</span>fname<span class="o">,</span>e<span class="o">))</span></div>
<div class="cl" style="top:1558px">            <span class="c"># look for PDF setup files</span></div>
<div class="cl" style="top:1577px">            fname <span class="o">=</span> filename<span class="o">+</span><span class="s">&#x27;.pdf&#x27;</span></div>
</div>
<div id="vsb"><i></i></div>
<div class="a" style="left:768px;top:0;width:1px;height:1637px;background:#1b1b1b"></div>
<div id="hsb"><i></i></div>
</div>
<div id="msg">
<div class="tabs">
<svg class="a" style="left:39px;top:10px" width="12" height="6"><path d="M0 6 L12 6 L6 0Z" fill="#8a8a88"/></svg>
<div class="a" style="left:25px;top:47px;line-height:16px">Status</div>
<svg class="a" style="left:39px;top:94px" width="12" height="6"><path d="M0 0 L12 0 L6 6Z" fill="#eeeeec"/></svg>
<div class="a" style="left:86px;top:24px;width:4px;height:61px;background:#15539e"></div>
</div>
<div class="ml" style="top:0px">00:09:07: This is Geany 1.38.</div>
<div class="ml" style="top:23px">00:09:07: File /home/hakan/linuxcnc/configs/sim.qtplasmac/qtplasmac.qss opened (1).</div>
<div class="ml" style="top:46px">00:09:07: File /home/hakan/Desktop/hakan.qss opened (2).</div>
<div class="ml" style="top:69px">00:09:07: File /home/hakan/linuxcnc/configs/sim.qtdragon<u>_</u>hd.qtdr…z/qtvcp/screens/qtdragon<u>_</u>hd/qtdragon<u>_</u>hd<u>_</u>handler.py opened (3).</div>
<div class="ml" style="top:92px">00:09:07: File /usr/share/qtvcp/screens/qtplasmac<u>_</u>9x16/qtplasmac<u>_</u>9x16<u>_</u>handler.py opened (4).</div>
<div class="a" style="left:405px;top:67px;width:257px;height:1px;background:#383838"></div>
</div>
<div id="stat"><span style="left:14px">line: 318 / 1684</span><span style="left:146px">col: 2</span><span style="left:210px">sel: 0</span><span style="left:274px">INS</span><span style="left:320px">TAB</span><span style="left:369px">mode: LF</span><span style="left:453px">encoding: UTF-8</span><span style="left:583px">filetype: Python</span><span style="left:709px">scope: HandlerClass.init_preferences</span></div>
</body></html>
